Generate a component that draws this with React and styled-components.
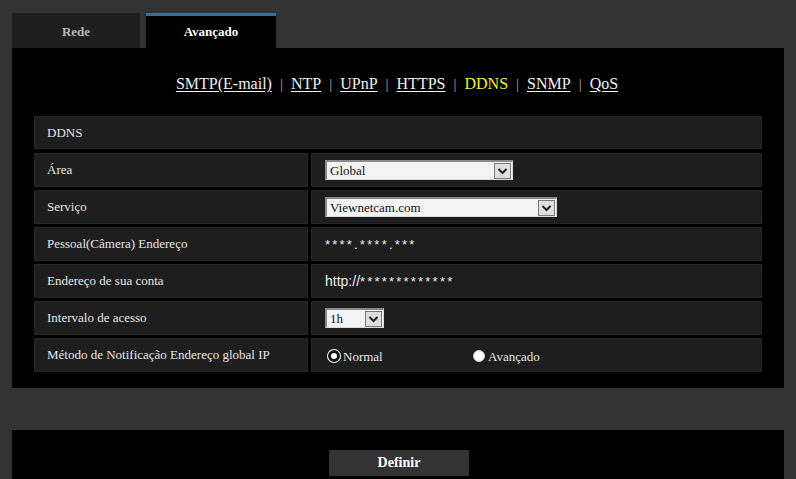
import React from "react";
import styled, { createGlobalStyle } from "styled-components";

const Global = createGlobalStyle`
  html, body { margin: 0; padding: 0; background: #333333; }
  body { font-family: "Liberation Serif", "Times New Roman", serif; color: #e8e8e8; }
`;

const Page = styled.div`
  width: 796px;
  height: 479px;
  overflow: hidden;
  padding: 13px 12px 0 12px;
  box-sizing: border-box;
  background: #333333;
`;

const Tabs = styled.div`
  display: flex;
  gap: 6px;
  height: 35px;
`;

const Tab = styled.div`
  width: ${(p) => p.$w}px;
  box-sizing: border-box;
  display: flex;
  align-items: center;
  justify-content: center;
  font-weight: bold;
  font-size: 13px;
  color: ${(p) => (p.$active ? "#ffffff" : "#b8b8b8")};
  background: ${(p) => (p.$active ? "#000000" : "#1f1f1f")};
  border-top: 3px solid ${(p) => (p.$active ? "#3a6d98" : "#1f1f1f")};
  padding-bottom: ${(p) => (p.$active ? "0" : "1px")};
`;

const Panel = styled.div`
  background: #000;
  padding: 0 22px 16px 22px;
`;

const Nav = styled.nav`
  height: 68px;
  box-sizing: border-box;
  padding-top: 4px;
  display: flex;
  align-items: center;
  justify-content: center;
  gap: 8px;
  font-size: 16px;
  padding-right: 2px;
`;

const NavLink = styled.a`
  color: ${(p) => (p.$current ? "#f2f21e" : "#f2f2f2")};
  text-decoration: ${(p) => (p.$current ? "none" : "underline")};
  text-underline-offset: 2px;
`;

const Sep = styled.span`
  color: #a8a8a8;
  font-size: 15px;
`;

const Table = styled.div`
  display: grid;
  grid-template-columns: 274px 1fr;
  column-gap: 3px;
  row-gap: 3px;
`;

const Cell = styled.div`
  box-sizing: border-box;
  height: ${(p) => (p.$h ? p.$h : 34)}px;
  background: #1e1e1e;
  border: 1px solid #262626;
  display: flex;
  align-items: center;
  padding-left: ${(p) => (p.$value ? 13 : 12)}px;
  font-size: 13px;
  color: #e6e6e6;
  grid-column: ${(p) => (p.$span ? "1 / span 2" : "auto")};
  margin-bottom: ${(p) => (p.$span ? "1px" : "0")};
`;

const Masked = styled.span`
  font-family: "Liberation Sans", Arial, sans-serif;
  font-size: 14px;
  color: #ececec;
`;

const Stars = styled.span`
  letter-spacing: 2.2px;
  font-size: 13px;
`;

const Select = styled.div`
  width: ${(p) => p.$w}px;
  height: 20px;
  box-sizing: border-box;
  display: flex;
  align-items: center;
  background: #f3f3f3;
  border-top: 2px solid #8a8a8a;
  border-left: 2px solid #8a8a8a;
  border-right: 1px solid #dcdcdc;
  border-bottom: 1px solid #dcdcdc;
  color: #111;
  font-size: 13px;
`;

const SelectText = styled.span`
  flex: 1;
  padding-left: 3px;
  white-space: nowrap;
`;

const Arrow = styled.span`
  width: 17px;
  height: 16px;
  box-sizing: border-box;
  margin-right: 1px;
  background: #dedede;
  border: 1px solid #7a7a7a;
  display: flex;
  align-items: center;
  justify-content: center;
`;

const Radios = styled.div`
  display: flex;
  align-items: center;
  padding-left: 3px;
  padding-top: 4px;
`;

const RadioLabel = styled.label`
  display: flex;
  align-items: center;
  gap: 3px;
  width: ${(p) => p.$w}px;
  font-size: 13px;
  color: #e6e6e6;
`;

const RadioDot = styled.span`
  width: 12px;
  height: 12px;
  border-radius: 50%;
  box-sizing: border-box;
  background: #ffffff;
  border: ${(p) => (p.$checked ? "3.5px solid #111" : "1px solid #cfcfcf")};
  box-shadow: ${(p) => (p.$checked ? "0 0 0 1px #fff" : "none")};
  margin-top: -2px;
`;

const Band = styled.div`
  height: 42px;
`;

const Footer = styled.div`
  background: #000;
  height: 60px;
  display: flex;
  justify-content: center;
  padding-top: 20px;
  box-sizing: border-box;
`;

const Button = styled.button`
  width: 140px;
  height: 26px;
  background: #333333;
  border: none;
  color: #ffffff;
  font-family: "Liberation Serif", "Times New Roman", serif;
  font-weight: bold;
  font-size: 14px;
  padding: 0;
  margin-left: 2px;
`;

const Chevron = () => (
  <svg width="11" height="8" viewBox="0 0 11 8">
    <path d="M1.5 2 L5.5 6 L9.5 2" fill="none" stroke="#222" strokeWidth="2" />
  </svg>
);

const Dropdown = ({ w, children }) => (
  <Select $w={w}>
    <SelectText>{children}</SelectText>
    <Arrow>
      <Chevron />
    </Arrow>
  </Select>
);

const links = ["SMTP(E-mail)", "NTP", "UPnP", "HTTPS", "DDNS", "SNMP", "QoS"];

export default function App() {
  return (
    <Page>
      <Global />
      <Tabs>
        <Tab $w={128}>Rede</Tab>
        <Tab $w={130} $active>
          Avançado
        </Tab>
      </Tabs>
      <Panel>
        <Nav>
          {links.map((l, i) => (
            <React.Fragment key={l}>
              {i > 0 && <Sep>|</Sep>}
              <NavLink $current={l === "DDNS"}>{l}</NavLink>
            </React.Fragment>
          ))}
        </Nav>
        <Table>
          <Cell $span $h={33}>DDNS</Cell>
          <Cell>Área</Cell>
          <Cell $value>
            <Dropdown w={188}>Global</Dropdown>
          </Cell>
          <Cell>Serviço</Cell>
          <Cell $value>
            <Dropdown w={232}>Viewnetcam.com</Dropdown>
          </Cell>
          <Cell>Pessoal(Câmera) Endereço</Cell>
          <Cell $value>
            <Masked>
              <Stars>****.****.***</Stars>
            </Masked>
          </Cell>
          <Cell>Endereço de sua conta</Cell>
          <Cell $value>
            <Masked>
              http://<Stars>*************</Stars>
            </Masked>
          </Cell>
          <Cell>Intervalo de acesso</Cell>
          <Cell $value>
            <Dropdown w={59}>1h</Dropdown>
          </Cell>
          <Cell>Método de Notificação Endereço global IP</Cell>
          <Cell $value>
            <Radios>
              <RadioLabel $w={145}>
                <RadioDot $checked />
                Normal
              </RadioLabel>
              <RadioLabel $w={120}>
                <RadioDot />
                Avançado
              </RadioLabel>
            </Radios>
          </Cell>
        </Table>
      </Panel>
      <Band />
      <Footer>
        <Button>Definir</Button>
      </Footer>
    </Page>
  );
}
